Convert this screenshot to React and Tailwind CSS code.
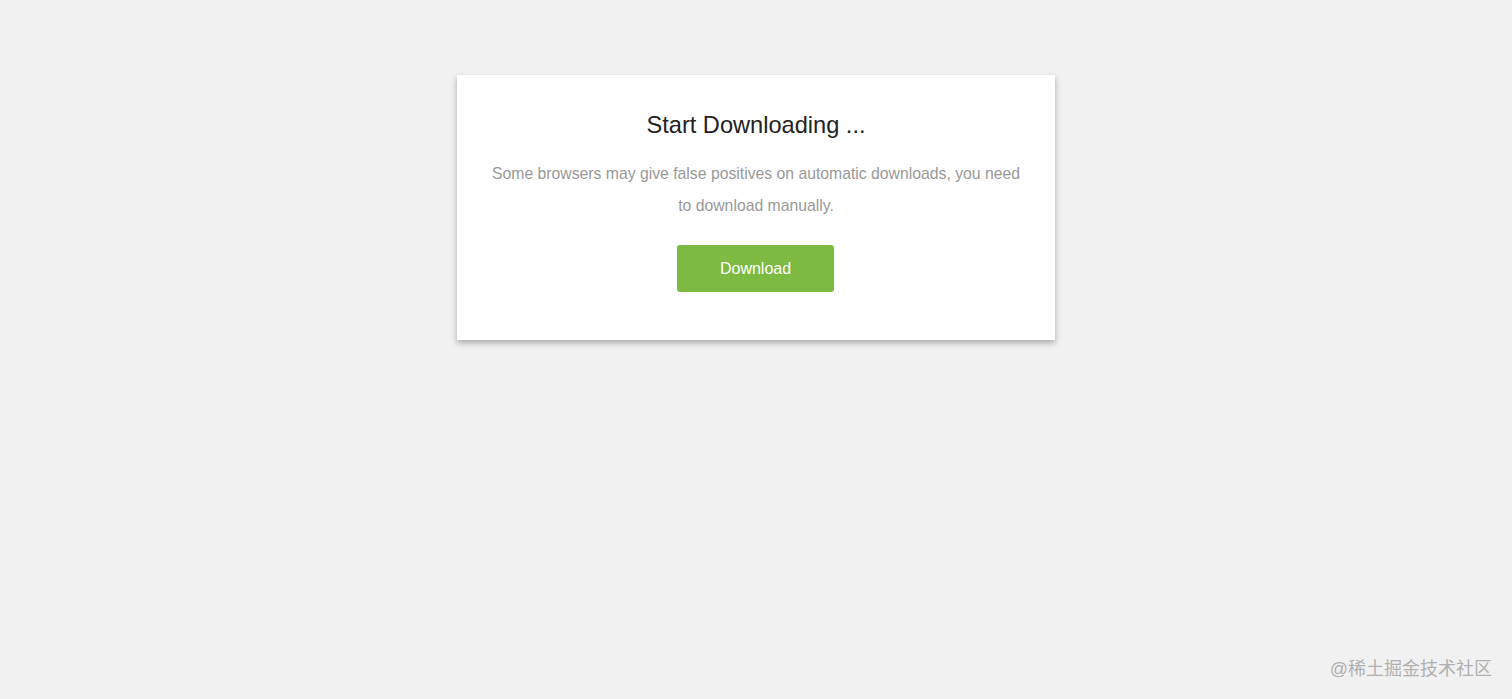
export default function App() {
  return (
    <div className="relative min-h-[699px] w-full bg-[#f1f1f1]" style={{ fontFamily: '"Liberation Sans", Arial, sans-serif' }}>
      <div className="flex justify-center pt-[75px]">
        <div className="w-[598px] bg-white px-[30px] pt-[32px] pb-[48px] text-center shadow-[0_3px_6px_rgba(0,0,0,0.3)]">
          <h1 className="text-[23.6px] leading-[36px] text-[#222]">Start Downloading ...</h1>
          <p className="mt-[15px] text-[15.75px] leading-[32px] text-[#999]">
            Some browsers may give false positives on automatic downloads, you need to download manually.
          </p>
          <div className="mt-[23px] flex justify-center">
            <button className="-ml-px h-[47px] w-[157px] rounded-[3px] bg-[#7dba41] text-[16px] text-white">Download</button>
          </div>
        </div>
      </div>
      <div
        className="absolute right-[20px] bottom-[18px] text-[18px] leading-[24px] text-[#b0b0b0]"
        style={{ fontFamily: '"Liberation Sans", "Noto Sans CJK SC", sans-serif' }}
      >
        @稀土掘金技术社区
      </div>
    </div>
  );
}
